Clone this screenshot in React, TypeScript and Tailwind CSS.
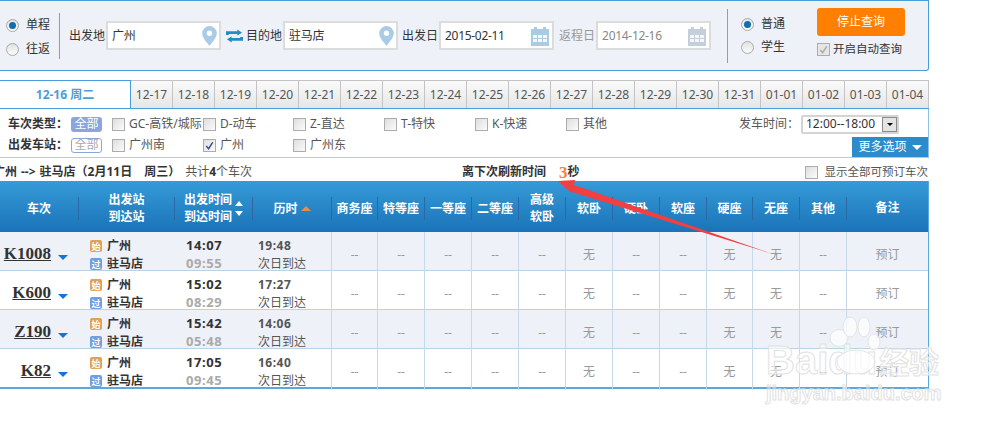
const cjk = "font-['Noto_Sans','Noto_Sans_CJK_SC',sans-serif]";

const dates = ["12-17","12-18","12-19","12-20","12-21","12-22","12-23","12-24","12-25","12-26","12-27","12-28","12-29","12-30","12-31","01-01","01-02","01-03","01-04"];
const cols = "grid grid-cols-[79px_96px_78px_79px_46px_47px_47px_47px_47px_47px_47px_47px_46px_47px_47px_81px]";
const seats = ["商务座","特等座","一等座","二等座","高级软卧","软卧","硬卧","软座","硬座","无座","其他"];
const rowSeats = ["--","--","--","--","--","无","--","--","无","无","--"];

const trains = [
  { no: "K1008", dep: "14:07", arr: "09:55", dur: "19:48" },
  { no: "K600", dep: "15:02", arr: "08:29", dur: "17:27" },
  { no: "Z190", dep: "15:42", arr: "05:48", dur: "14:06" },
  { no: "K82", dep: "17:05", arr: "09:45", dur: "16:40" },
];

function Radio({ on }: { on?: boolean }) {
  return (
    <span className="flex h-[13px] w-[13px] items-center justify-center rounded-full border border-[#a9a9a9] bg-gradient-to-b from-[#e2e2e2] to-[#fbfbfb]">
      {on && <span className="h-[7px] w-[7px] rounded-full bg-[#0f6fae]" />}
    </span>
  );
}

function Check({ on, muted }: { on?: boolean; muted?: boolean }) {
  return (
    <span className={`flex h-[13px] w-[13px] shrink-0 items-center justify-center border border-[#acacac] bg-gradient-to-br ${muted ? "from-[#e6e6e6] to-[#e6e6e6]" : "from-[#dedede] to-[#fbfbfb]"}`}>
      {on && (
        <svg viewBox="0 0 12 12" className="h-[11px] w-[11px]" fill="none" stroke={muted ? "#aaaaaa" : "#3a4d94"} strokeWidth="1.6">
          <path d="M2.5 6.5 5 9.5 9.5 2.5" />
        </svg>
      )}
    </span>
  );
}

function Pin() {
  return (
    <svg viewBox="0 0 16 22" className="h-[20px] w-[15px]">
      <path fillRule="evenodd" fill="#a9cbe6" d="M8 0a8 8 0 0 1 8 8c0 5-5 10-8 14C5 18 0 13 0 8a8 8 0 0 1 8-8Zm0 5a3 3 0 1 0 0 6 3 3 0 0 0 0-6Z" />
    </svg>
  );
}

function Calendar({ color }: { color: string }) {
  return (
    <svg viewBox="0 0 20 20" className="h-[20px] w-[20px]" fill={color}>
      <path d="M1 3h3V1h3v2h6V1h3v2h3v17H1V3Z" />
      <g fill="#f4f7fb">
        <rect x="3" y="9" width="4" height="3" />
        <rect x="8" y="9" width="4" height="3" />
        <rect x="13" y="9" width="4" height="3" />
        <rect x="3" y="13" width="4" height="3" />
        <rect x="8" y="13" width="4" height="3" />
        <rect x="13" y="13" width="4" height="3" />
      </g>
    </svg>
  );
}

function Field({ value, icon, muted }: { value: string; icon: React.ReactNode; muted?: boolean }) {
  return (
    <div className={`flex h-[29px] w-[115px] items-center justify-between border-2 border-[#dcdcdc] bg-white pl-[4px] pr-[2px] text-[12px] tracking-[-0.3px] ${muted ? "text-[#888]" : "text-[#333]"}`}>
      <span>{value}</span>
      {icon}
    </div>
  );
}

function Filter({ label, on, className }: { label: string; on?: boolean; className: string }) {
  return (
    <div className={`flex items-center gap-[4px] text-[12px] ${className}`}>
      <Check on={on} />
      <span className="whitespace-nowrap text-[#555]">{label}</span>
    </div>
  );
}

function Tag({ text, color }: { text: string; color: string }) {
  return (
    <span className={`flex h-[12px] w-[12px] items-center justify-center rounded-[2px] text-[9px] leading-none text-white ${color}`}>
      {text}
    </span>
  );
}

export default function App() {
  return (
    <div className={`relative h-[424px] w-[1000px] overflow-hidden bg-white text-[12px] text-[#333] ${cjk}`}>
      {/* search panel */}
      <div className="flex h-[71px] w-[929px] items-center rounded-br-[3px] border-y border-r border-[#4a9ddb] bg-[#eef1f8]">
        <div className="flex w-[59px] flex-col gap-[6px] pl-[6px] pt-[3px]">
          <div className="flex items-center gap-[7px]"><Radio on /><span>单程</span></div>
          <div className="flex items-center gap-[7px]"><Radio /><span>往返</span></div>
        </div>
        <div className="h-[46px] w-px bg-[#6aa9d8]" />
        <span className="ml-[9px] mr-[1px]">出发地</span>
        <Field value="广州" icon={<Pin />} />
        <svg viewBox="0 0 18 14" className="ml-[5px] mr-[3px] h-[14px] w-[17px]" fill="#1d8fc4">
          <path d="M0 6V2h12V0l5 3.5L12 6.5V5H3v1H0Zm18 2v4H6v2L1 10.5 6 7.5V9h9V8h3Z" />
        </svg>
        <span className="mr-[1px]">目的地</span>
        <Field value="驻马店" icon={<Pin />} />
        <span className="ml-[4px] mr-[1px]">出发日</span>
        <Field value="2015-02-11" icon={<Calendar color="#a9cbe6" />} />
        <span className="ml-[5px] mr-[1px] text-[#999]">返程日</span>
        <Field value="2014-12-16" muted icon={<Calendar color="#c5cfdc" />} />
        <div className="ml-[16px] h-[54px] w-px bg-[#6aa9d8]" />
        <div className="ml-[13px] flex w-[76px] flex-col gap-[5px]">
          <div className="flex items-center gap-[7px]"><Radio on /><span>普通</span></div>
          <div className="flex items-center gap-[7px]"><Radio /><span>学生</span></div>
        </div>
        <div className="flex flex-col gap-[4px] pb-[5px]">
          <button type="button" className="h-[28px] w-[88px] rounded-[3px] bg-[#ff8000] text-[12px] text-white">停止查询</button>
          <div className="flex items-center gap-[3px] text-[11.5px]"><Check on muted /><span>开启自动查询</span></div>
        </div>
      </div>

      {/* date tabs */}
      <div className="mt-[9px] flex h-[29px] w-[929px] border-b border-[#4a9ddb]">
        <div className="flex w-[131px] items-center justify-center border-t border-r border-[#4a9ddb] font-bold text-[#4a9ddb]">12-16 周二</div>
        {dates.map((d) => (
          <div key={d} className="flex w-[42px] items-center justify-center border-t border-r border-[#c4c4c4] bg-gradient-to-b from-[#fafafa] to-[#e6e6e6] pt-[1px] text-[#555]">
            {d}
          </div>
        ))}
      </div>

      {/* filters */}
      <div className="relative h-[49px] w-[929px] border-r border-b border-r-[#8fc0e6] border-b-[#a8cfeb] pl-[8px] pt-[7px]">
        <div className="flex h-[16px] items-center">
          <span className="w-[63px] font-bold">车次类型：</span>
          <span className="flex h-[15px] w-[31px] items-center justify-center rounded-[3px] bg-[#8ba6dc] text-white">全部</span>
          <Filter label="GC-高铁/城际" className="ml-[10px] w-[91px]" />
          <Filter label="D-动车" className="w-[90px]" />
          <Filter label="Z-直达" className="w-[91px]" />
          <Filter label="T-特快" className="w-[91px]" />
          <Filter label="K-快速" className="w-[91px]" />
          <Filter label="其他" className="w-[173px]" />
          <span className="w-[62px] whitespace-nowrap text-[#555]">发车时间：</span>
          <div className="flex h-[19px] w-[98px] items-center justify-between rounded-[2px] border-2 border-[#d4d4d4] pl-[3px] text-[12px] text-[#333]">
            <span>12:00--18:00</span>
            <span className="flex h-[15px] w-[15px] items-center justify-center border border-[#8a8a8a] bg-[#e4e4e4]">
              <span className="h-0 w-0 border-x-[3px] border-t-[3px] border-x-transparent border-t-black" />
            </span>
          </div>
        </div>
        <div className="mt-[5px] flex h-[16px] items-center">
          <span className="w-[63px] font-bold">出发车站：</span>
          <span className="flex h-[15px] w-[31px] items-center justify-center rounded-[3px] border border-[#8ba6dc] text-[#aaa]">全部</span>
          <Filter label="广州南" className="ml-[10px] w-[91px]" />
          <Filter label="广州" on className="w-[90px]" />
          <Filter label="广州东" className="w-[91px]" />
        </div>
        <div className="absolute right-0 bottom-0 flex h-[20px] w-[76px] items-center justify-center gap-[5px] bg-[#2b8ccd] text-white">
          更多选项
          <span className="h-0 w-0 border-x-[5px] border-t-[5px] border-x-transparent border-t-white" />
        </div>
      </div>

      {/* summary line */}
      <div className="flex h-[23px] w-[929px] items-center whitespace-nowrap pt-[5px]">
        <div className="-ml-[7px] flex w-[469px] font-bold">
          <span>广州</span>
          <span className="mx-[4px]">--&gt;</span>
          <span>驻马店（2月11日</span>
          <span className="ml-[12px] mr-[5px]">周三）</span>
          <span className="font-normal text-[#555]">共计<b className="text-[#333]">4</b>个车次</span>
        </div>
        <b className="text-[#333]">离下次刷新时间</b>
        <b className="ml-[13px] font-['Liberation_Serif',serif] text-[17px] leading-none text-[#ff7f27]">3</b>
        <b>秒</b>
        <div className="ml-[225px] flex items-center gap-[7px] text-[11.5px] text-[#555]">
          <Check />
          显示全部可预订车次
        </div>
      </div>

      {/* results table */}
      <div className="w-[929px] border-r border-b-2 border-[#5ba8dd]">
        <div className={`${cols} h-[51px] items-center bg-gradient-to-b from-[#359bd8] to-[#1b73b8] pt-[3px] font-bold text-white`}>
          <HeadCell>车次</HeadCell>
          <HeadCell>出发站<br />到达站</HeadCell>
          <HeadCell>
            <div className="flex items-center justify-center gap-[3px]">
              <span>出发时间<br />到达时间</span>
              <span className="flex flex-col gap-[5px]">
                <span className="h-0 w-0 border-x-[4px] border-b-[5px] border-x-transparent border-b-white" />
                <span className="h-0 w-0 border-x-[4px] border-t-[5px] border-x-transparent border-t-white" />
              </span>
            </div>
          </HeadCell>
          <HeadCell>
            <div className="flex items-center justify-center gap-[3px]">
              历时
              <span className="h-0 w-0 border-x-[5px] border-b-[5px] border-x-transparent border-b-[#f08a3c]" />
            </div>
          </HeadCell>
          {seats.map((s) => (
            <HeadCell key={s}>{s === "高级软卧" ? <>高级<br />软卧</> : s}</HeadCell>
          ))}
          <div className="text-center">备注</div>
        </div>

        {trains.map((t, i) => (
          <div key={t.no} className={`${cols} h-[39px] border-b border-[#b9d3e5] ${i % 2 === 0 ? "bg-[#eef1f8]" : "bg-white"} last:h-[38px] last:border-b-0`}>
            <div className="flex items-center justify-end pt-[3px] pr-[11px]">
              <span className="font-['Liberation_Serif',serif] text-[17px] font-bold text-[#333] underline">{t.no}</span>
              <span className="mt-[7px] ml-[7px] h-0 w-0 border-x-[5px] border-t-[5px] border-x-transparent border-t-[#1473d6]" />
            </div>
            <div className="flex flex-col justify-center gap-[6px] pt-[5px] pl-[11px] font-bold leading-[12px]">
              <div className="flex items-center gap-[5px]"><Tag text="始" color="bg-[#dfa254]" />广州</div>
              <div className="flex items-center gap-[5px]"><Tag text="过" color="bg-[#6f9fe0]" />驻马店</div>
            </div>
            <div className="flex flex-col justify-center pt-[3px] pl-[11px] text-[13px] font-bold leading-[18px] tracking-[0.6px]">
              <span>{t.dep}</span>
              <span className="text-[#aaa]">{t.arr}</span>
            </div>
            <div className="flex flex-col justify-center border-r border-[#c5d9e8] pt-[5px] pl-[5px] leading-[18px] text-[#555]">
              <span className="font-bold tracking-[0.5px]">{t.dur}</span>
              <span>次日到达</span>
            </div>
            {rowSeats.map((s, j) => (
              <div key={j} className="flex items-center justify-center border-r border-[#c5d9e8] pt-[5px] text-[#999]">
                {s}
              </div>
            ))}
            <div className="flex items-center justify-center pt-[5px] text-[#999]">预订</div>
          </div>
        ))}
      </div>

      {/* red arrow annotation */}
      <svg className="pointer-events-none absolute top-0 left-0" width="1000" height="424" viewBox="0 0 1000 424">
        <path d="M558 181 575 180 574 185 771 253.500 572 192 572 193.500Z" fill="#f33f3f" />
      </svg>

      {/* watermark */}
      <div className="pointer-events-none absolute top-[316px] left-[766px] flex h-[100px] w-[230px] flex-col">
        <svg viewBox="0 0 60 60" className="absolute top-0 left-[62px] h-[60px] w-[60px]" fill="#ffffff" fillOpacity="0.7" stroke="#e4e4e4" strokeWidth="1">
          <ellipse cx="11" cy="22" rx="9" ry="8.500" />
          <ellipse cx="22" cy="11" rx="7" ry="10" />
          <ellipse cx="36" cy="11" rx="6" ry="10" />
          <ellipse cx="46" cy="26" rx="6" ry="8" />
          <ellipse cx="28" cy="46" rx="19" ry="12" />
        </svg>
        <div className="mt-[22px] flex items-center font-['Liberation_Sans',sans-serif] text-[40px] leading-[44px] font-bold text-white/60 [-webkit-text-stroke:1px_#e2e2e2]">
          Baidu<span className="ml-[2px] font-['Noto_Sans_CJK_SC',sans-serif] text-[30px]">经验</span>
        </div>
        <div className="font-['Liberation_Sans',sans-serif] text-[20px] leading-[22px] font-bold text-white/60 [-webkit-text-stroke:1px_#e2e2e2]">jingyan.baidu.com</div>
      </div>
    </div>
  );
}

function HeadCell({ children }: { children: React.ReactNode }) {
  return (
    <div className="flex h-[23px] items-center justify-center border-r border-[#2a68a8] text-center leading-[17px]">
      <div>{children}</div>
    </div>
  );
}
